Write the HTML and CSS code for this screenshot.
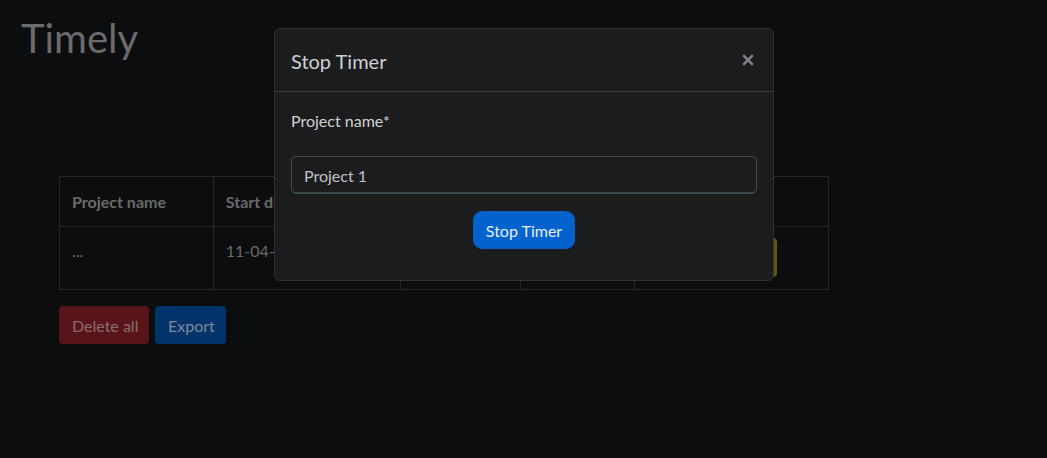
FILE: index.html
```html
<!DOCTYPE html>
<html lang="en">
<head>
<meta charset="utf-8">
<title>Timely</title>
<link rel="stylesheet" href="styles.css">
</head>
<body>
<div class="page">
  <h1 class="brand">Timely</h1>
  <div class="content">
    <table class="projects">
      <thead>
        <tr>
          <th class="c1">Project name</th>
          <th class="c2">Start date</th>
          <th class="c3">End date</th>
          <th class="c4">Duration</th>
          <th class="c5">Actions</th>
        </tr>
      </thead>
      <tbody>
        <tr>
          <td>...</td>
          <td>11-04-2023 10:12</td>
          <td>-</td>
          <td>00:05:12</td>
          <td><button class="btn btn-warn">Stop</button></td>
        </tr>
      </tbody>
    </table>
    <div class="actions">
      <button class="btn btn-del">Delete all</button>
      <button class="btn btn-exp">Export</button>
    </div>
  </div>
</div>

<div class="modal">
  <div class="modal-header">
    <h5 class="modal-title">Stop Timer</h5>
    <button class="close" aria-label="Close">
      <svg width="12" height="12" viewBox="0 0 12 12"><path d="M1.2 1.2 10.8 10.8M10.8 1.2 1.2 10.8" stroke="#7f8184" stroke-width="2.6"/></svg>
    </button>
  </div>
  <div class="modal-body">
    <label class="label">Project name*</label>
    <input class="input" type="text" value="Project 1">
    <div class="center">
      <button class="btn btn-primary">Stop Timer</button>
    </div>
  </div>
</div>
</body>
</html>
```
FILE: styles.css
```css
* { box-sizing: border-box; }
html, body { margin: 0; padding: 0; }
body {
  width: 1047px;
  height: 458px;
  background: #0c0d0f;
  font-family: "Segoe UI", Lato, "Noto Sans", sans-serif;
  font-size: 16px;
  color: #6e6e6e;
  overflow: hidden;
  position: relative;
}
.page { padding: 12px 0 0 21px; }
.brand {
  margin: 0;
  font-weight: 400;
  font-size: 40px;
  line-height: 52px;
  color: #6b6b6b;
}
.content { padding: 112px 0 0 38px; }
.projects {
  border-collapse: collapse;
  width: 770px;
}
.projects th, .projects td {
  border: 1px solid #25272a;
  text-align: left;
  padding: 0 12px;
  white-space: nowrap;
}
.projects th {
  height: 50px;
  font-weight: 700;
  font-size: 16px;
  color: #6a6a6a;
}
.projects td {
  height: 63px;
  color: #6a6a6a;
  vertical-align: top;
  padding-top: 12px;
  line-height: 24px;
}
.c1 { width: 154px; }
.c2 { width: 187px; }
.c3 { width: 121px; }
.c4 { width: 114px; }
.c5 { width: 194px; }
.actions { display: flex; gap: 6px; margin-top: 16px; }
.btn {
  font-family: inherit;
  font-size: 16px;
  border: 1px solid transparent;
  border-radius: 4px;
  height: 38px;
  padding: 0 12px;
  white-space: nowrap;
}
.btn-del { background: #58141a; color: #8a6d6f; width: 90px; }
.btn-exp { background: #02336b; color: #7f8a98; width: 71px; }
.btn-warn { background: #6b5408; color: #6b5408; width: 130px; display: block; margin-top: -1px; height: 39px; }

.modal {
  position: absolute;
  left: 274px;
  top: 28px;
  width: 500px;
  background: #1b1c1e;
  border: 1px solid #2f3134;
  border-radius: 6px;
  color: #d2d2d2;
}
.modal-header {
  display: flex;
  align-items: center;
  padding: 17px 16px 15px;
  border-bottom: 1px solid #3b3e40;
}
.modal-title {
  margin: 0;
  font-size: 20px;
  font-weight: 400;
  line-height: 30px;
  color: #d0d0d0;
}
.close {
  margin-left: auto;
  background: none;
  border: 0;
  padding: 0;
  width: 12px;
  height: 12px;
  margin-right: 3px;
  margin-top: -3px;
  display: flex;
  align-items: center;
  justify-content: center;
}
.modal-body { padding: 17px 16px 16px; }
.label { display: block; line-height: 24px; }
.input {
  display: block;
  width: 100%;
  height: 38px;
  margin-top: 23px;
  padding: 1px 12px 0;
  font-family: inherit;
  font-size: 16px;
  color: #c2c2c2;
  background: #1b1c1e;
  border: 1px solid #45484b;
  border-bottom: 2px solid #3d4646;
  border-radius: 5px;
  outline: none;
}
.center { display: flex; justify-content: center; margin-top: 17px; padding-bottom: 15px; }
.btn-primary {
  background: #0263cf;
  border-color: #0a5fc0;
  color: #e8eef8;
  border-radius: 9px;
  width: 102px;
  padding: 0;
}
```
